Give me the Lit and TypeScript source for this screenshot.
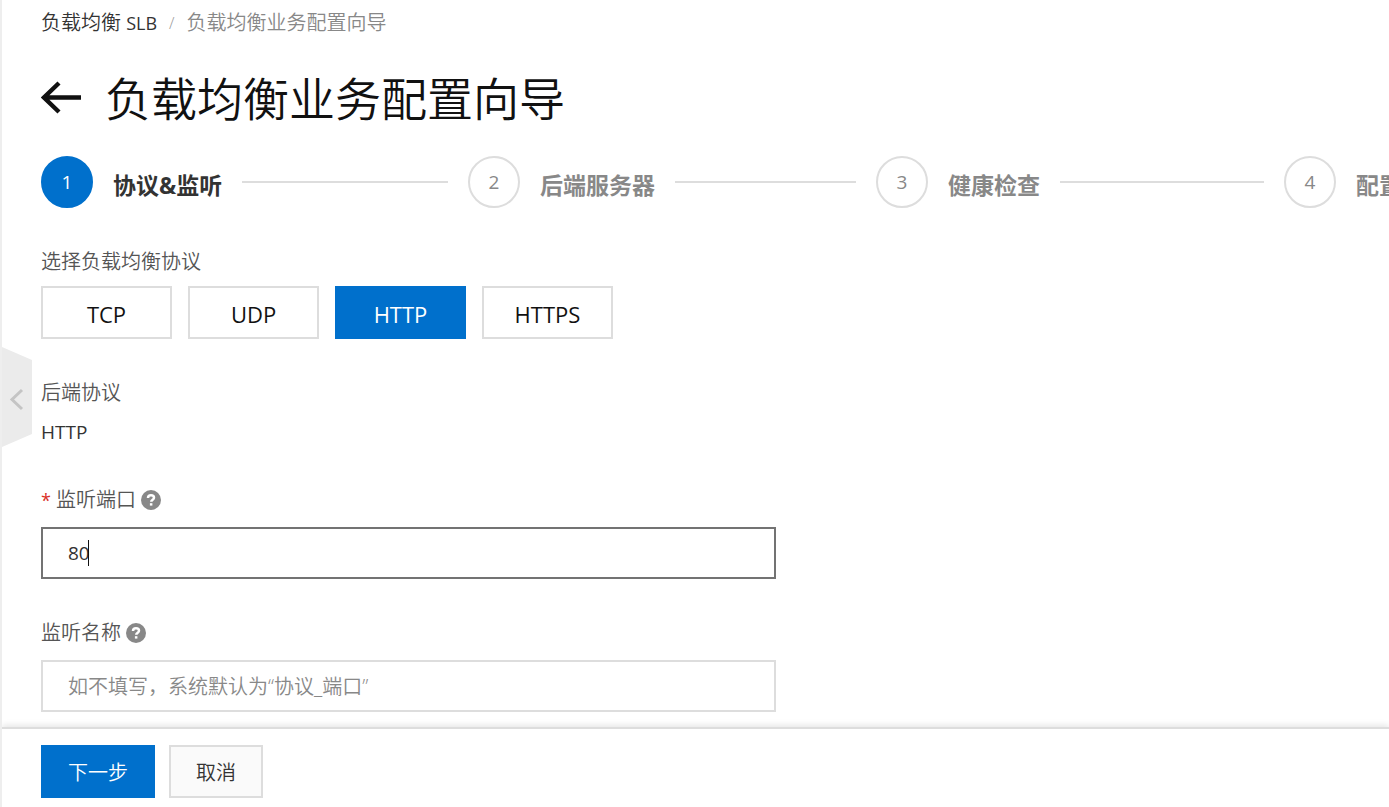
import { LitElement, html, css, svg } from "lit";
import { customElement, state } from "lit/decorators.js";
import { classMap } from "lit/directives/class-map.js";

const helpIcon = html`<svg class="help" viewBox="0 0 20 20" aria-hidden="true">
  <circle cx="10" cy="10" r="10" fill="#888"></circle>
  ${svg`<path d="M7 7.9C7 6 8.2 5.2 10 5.2s3 .9 3 2.5c0 1.9-2.8 2-2.8 4.1" fill="none" stroke="#fff" stroke-width="2.5"></path>
  <rect x="8.9" y="13.2" width="2.5" height="2.4" fill="#fff"></rect>`}
</svg>`;

@customElement("app-root")
export class AppRoot extends LitElement {
  @state() private protocol = "HTTP";

  private steps = ["协议&监听", "后端服务器", "健康检查", "配置审核"];
  private protocols = ["TCP", "UDP", "HTTP", "HTTPS"];

  static styles = css`
    :host {
      display: flex;
      flex-direction: column;
      position: relative;
      box-sizing: border-box;
      min-height: 100vh;
      border-left: 2px solid #eee;
      overflow-x: clip;
      background: #fff;
      color: #333;
      font-family: "Open Sans", "Noto Sans CJK SC", sans-serif;
      font-size: 20px;
      font-weight: 350;
      line-height: 28px;
    }
    * { box-sizing: border-box; }
    button, input { font: inherit; color: inherit; border-radius: 0; margin: 0; }
    button { cursor: pointer; padding: 0; }
    main { flex: 1; padding: 9px 0 15px 39px; }
    .latin { font-size: 18px; font-weight: 400; }
    .crumbs { display: flex; gap: 12px; }
    .crumbs a { color: #333; text-decoration: none; }
    .crumbs .sep { color: #999; font-size: 16px; }
    .crumbs .current { color: #888; }
    .heading { display: flex; align-items: center; gap: 24px; margin-top: 29px; }
    .back { display: flex; border: 0; background: none; }
    .back svg { width: 40px; height: 34px; }
    h1 { margin: 0; font-size: 46px; line-height: 64px; font-weight: 350; color: #111; }
    .steps { display: flex; list-style: none; margin: 26px 0 0; padding: 0; overflow: hidden; }
    .step { display: flex; align-items: center; gap: 20px; flex: 0 0 408px; padding-right: 20px; color: #888; }
    .step:first-child { flex-basis: 427px; color: #333; }
    .dot {
      display: flex; align-items: center; justify-content: center;
      flex: none; width: 52px; height: 52px; border: 2px solid #ddd; border-radius: 50%;
      font-size: 19px; font-weight: 400;
    }
    .step:first-child .dot { background: #0070cc; border-color: #0070cc; color: #fff; }
    .name { flex: none; font-size: 23px; font-weight: 700; padding-top: 6px; }
    .line { flex: 1; height: 2px; background: #ddd; }
    .field { margin-top: 40px; }
    .label { display: flex; align-items: center; gap: 5px; color: #555; margin-bottom: 13px; }
    .protocols .label { margin-bottom: 10px; }
    .static .label { margin-bottom: 11px; }
    .static .latin { font-size: 19px; }
    .required { color: #d93026; font-size: 18px; font-weight: 400; }
    .help { width: 20px; height: 20px; }
    .options { display: flex; gap: 16px; }
    .option {
      width: 131px; height: 53px; padding-top: 2px; border: 2px solid #ddd; background: #fff;
      color: #111; font-size: 22px; font-weight: 400;
    }
    .option.on { background: #0070cc; border-color: #0070cc; color: #fff; }
    .box { position: relative; width: 735px; max-width: 100%; }
    input { display: block; width: 100%; height: 52px; padding: 0 25px; border: 2px solid #ddd; background: #fff; outline: none; }
    input::placeholder { color: #888; opacity: 1; }
    .active input { border-color: #737373; caret-color: transparent; font-size: 19px; font-weight: 400; }
    .caret { position: absolute; left: 47px; top: 13px; width: 1px; height: 26px; background: #111; }
    footer {
      position: sticky; bottom: 0; display: flex; gap: 14px; padding: 16px 39px 9px;
      border-top: 2px solid #ddd; background: #fff; box-shadow: 0 -2px 6px rgba(0, 0, 0, 0.1);
    }
    .action { height: 53px; padding: 2px 25px 0; border: 2px solid #ddd; background: #fafafa; }
    .action.primary { background: #0070cc; border-color: #0070cc; color: #fff; }
    .collapse { position: absolute; left: 0; top: 347px; border: 0; background: none; display: flex; }
    .collapse svg { width: 30px; height: 100px; }
  `;

  render() {
    return html`
      <main>
        <nav class="crumbs" aria-label="breadcrumb">
          <a href="#">负载均衡 <span class="latin">SLB</span></a>
          <span class="sep">/</span>
          <span class="current">负载均衡业务配置向导</span>
        </nav>
        <div class="heading">
          <button class="back" aria-label="返回">
            <svg viewBox="0 0 40 34" fill="none" stroke="#111" stroke-width="4.4">
              <path d="M2.5 16.500H40M18 2L3 16.500L18 31"></path>
            </svg>
          </button>
          <h1>负载均衡业务配置向导</h1>
        </div>
        <ol class="steps">
          ${this.steps.map(
            (name, i) => html`<li class="step">
              <span class="dot">${i + 1}</span><span class="name">${name}</span><span class="line"></span>
            </li>`
          )}
        </ol>
        <div class="field protocols" role="group" aria-labelledby="protocol">
          <div class="label" id="protocol">选择负载均衡协议</div>
          <div class="options">
            ${this.protocols.map(
              (p) => html`<button
                class=${classMap({ option: true, on: p === this.protocol })}
                aria-pressed=${p === this.protocol}
                @click=${() => (this.protocol = p)}
              >${p}</button>`
            )}
          </div>
        </div>
        <div class="field static">
          <div class="label">后端协议</div>
          <div class="latin">HTTP</div>
        </div>
        <div class="field">
          <label class="label" for="port"><span class="required">*</span>监听端口 ${helpIcon}</label>
          <div class="box active"><input id="port" type="text" value="80" /><span class="caret"></span></div>
        </div>
        <div class="field">
          <label class="label" for="name">监听名称 ${helpIcon}</label>
          <div class="box"><input id="name" type="text" placeholder="如不填写，系统默认为“协议_端口”" /></div>
        </div>
      </main>
      <footer>
        <button class="action primary">下一步</button>
        <button class="action">取消</button>
      </footer>
      <button class="collapse" aria-label="收起">
        <svg viewBox="0 0 30 100">
          <path d="M0 0L30 13V87L0 100Z" fill="#ebebeb"></path>
          <path d="M20 43L10 52.500L20 62" fill="none" stroke="#c4c4c4" stroke-width="3"></path>
        </svg>
      </button>
    `;
  }
}
